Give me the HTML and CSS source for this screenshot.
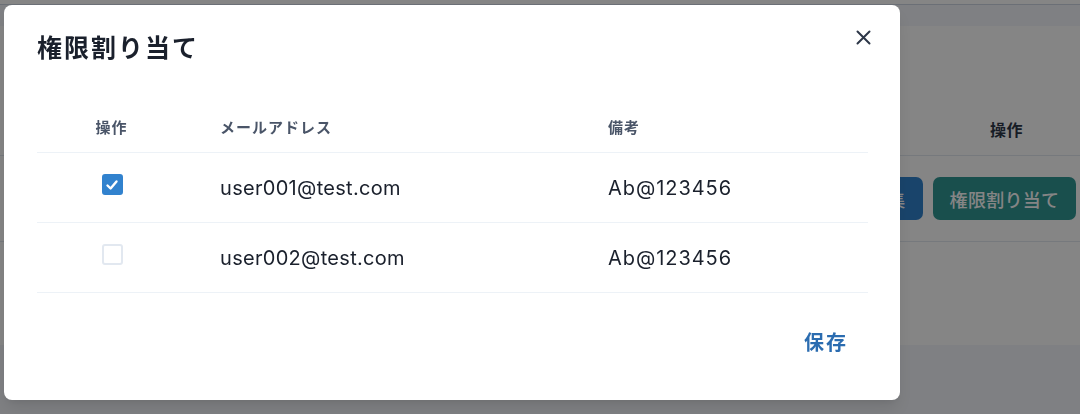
FILE: index.html
```html
<!DOCTYPE html>
<html lang="ja">
<head>
<meta charset="utf-8">
<title>権限割り当て</title>
<link rel="stylesheet" href="styles.css">
</head>
<body>
<div class="page">
  <div class="topbar"></div>
  <div class="card">
    <div class="bg-table">
      <div class="bg-head">
        <div class="bg-col-main"></div>
        <div class="bg-col-ops bg-th">操作</div>
      </div>
      <div class="bg-row">
        <div class="bg-col-main"></div>
        <div class="bg-col-ops bg-actions">
          <button class="bg-btn bg-btn-blue">編集</button>
          <button class="bg-btn bg-btn-teal">権限割り当て</button>
        </div>
      </div>
    </div>
  </div>
</div>

<div class="overlay"></div>

<div class="modal" role="dialog">
  <header class="modal-header">
    <h2 class="modal-title">権限割り当て</h2>
  </header>
  <button class="close-btn" aria-label="閉じる">
    <svg width="15" height="15" viewBox="0 0 15 15"><path d="M1.5 1.5 L13.5 13.5 M13.5 1.5 L1.5 13.5" stroke="#2d3748" stroke-width="2" stroke-linecap="round" fill="none"/></svg>
  </button>
  <div class="modal-body">
    <div class="table">
      <div class="tr thead">
        <div class="td c1">操作</div>
        <div class="td c2">メールアドレス</div>
        <div class="td c3">備考</div>
      </div>
      <div class="tr">
        <div class="td c1"><span class="checkbox checked"><svg width="14" height="14" viewBox="0 0 14 14"><path d="M2.5 7.5 L5.6 10.5 L11.5 3.5" stroke="#fff" stroke-width="2.4" fill="none" stroke-linecap="round" stroke-linejoin="round"/></svg></span></div>
        <div class="td c2 val">user001@test.com</div>
        <div class="td c3 val">Ab@123456</div>
      </div>
      <div class="tr">
        <div class="td c1"><span class="checkbox"></span></div>
        <div class="td c2 val">user002@test.com</div>
        <div class="td c3 val">Ab@123456</div>
      </div>
    </div>
  </div>
  <footer class="modal-footer">
    <button class="save-btn">保存</button>
  </footer>
</div>
</body>
</html>
```
FILE: styles.css
```css
* { box-sizing: border-box; }
html, body {
  margin: 0;
  padding: 0;
  width: 1080px;
  height: 414px;
  overflow: hidden;
}
body {
  background: #f4f6fb;
  font-family: Inter, "Noto Sans CJK JP", sans-serif;
  color: #1a202c;
}
button { font-family: inherit; border: none; background: none; padding: 0; cursor: pointer; }

/* background page */
.page { width: 1080px; }
.topbar {
  height: 5px;
  background: #ffffff;
  border-bottom: 1px solid #cdd5e3;
}
.card {
  margin-top: 21px;
  height: 319px;
  background: #ffffff;
  padding-top: 76px;
}
.bg-head, .bg-row {
  display: flex;
  border-bottom: 1px solid #e2e8f0;
}
.bg-head { height: 54px; align-items: center; }
.bg-row { height: 86px; align-items: center; }
.bg-col-main { width: 830px; }
.bg-col-ops { flex: 1; }
.bg-th {
  padding-left: 160px;
  font-size: 16px;
  font-weight: 600;
  color: #2d3748;
  letter-spacing: 0.5px;
}
.bg-actions { display: flex; gap: 10px; padding-left: 22px; }
.bg-btn {
  height: 43px;
  padding: 0 17px;
  border-radius: 7px;
  color: #fff;
  font-size: 18px;
  font-weight: 500;
  letter-spacing: 0.3px;
}
.bg-btn-blue { background: #3182ce; }
.bg-btn-teal { background: #319795; }

.overlay {
  position: fixed;
  inset: 0;
  background: rgba(0, 0, 0, 0.48);
}

/* modal */
.modal {
  position: absolute;
  left: 4px;
  top: 5px;
  width: 896px;
  height: 395px;
  background: #ffffff;
  border-radius: 8px;
  box-shadow: 0 10px 15px -3px rgba(0,0,0,0.1), 0 4px 6px -2px rgba(0,0,0,0.05);
}
.modal-header {
  padding: 25px 60px 0 33px;
}
.modal-title {
  margin: 0;
  font-size: 25px;
  line-height: 36px;
  font-weight: 700;
  letter-spacing: 2px;
  color: #1a202c;
}
.close-btn {
  position: absolute;
  top: 16px;
  right: 21px;
  width: 32px;
  height: 32px;
  display: flex;
  align-items: center;
  justify-content: center;
  border-radius: 6px;
}
.modal-body {
  padding: 34px 32px 0 33px;
}
.tr {
  display: grid;
  grid-template-columns: 150px 388px 1fr;
  height: 70px;
  border-bottom: 1px solid #edf2f7;
  align-items: center;
}
.tr.thead { height: 53px; }
.td.c1 { display: flex; justify-content: center; }
.td.c2, .td.c3 { padding-left: 33px; }
.thead .td {
  font-size: 15px;
  font-weight: 600;
  color: #4a5568;
  letter-spacing: 1px;
}
.thead .c1 { padding-right: 1px; }
.val {
  font-size: 20px;
  letter-spacing: 0.3px;
  color: #1a202c;
}
.c3.val { letter-spacing: 0.95px; }
.checkbox {
  width: 21px;
  height: 21px;
  border: 2px solid #e2e8f0;
  border-radius: 3px;
  display: flex;
  align-items: center;
  justify-content: center;
  margin-top: -6px;
}
.checkbox.checked {
  background: #3182ce;
  border-color: #3182ce;
}
.modal-footer {
  display: flex;
  justify-content: flex-end;
  padding: 28px 38px 0 0;
}
.save-btn {
  height: 40px;
  padding: 0 14px 0 16px;
  font-size: 20px;
  font-weight: 700;
  color: #2b6cb0;
  letter-spacing: 2px;
}
```
